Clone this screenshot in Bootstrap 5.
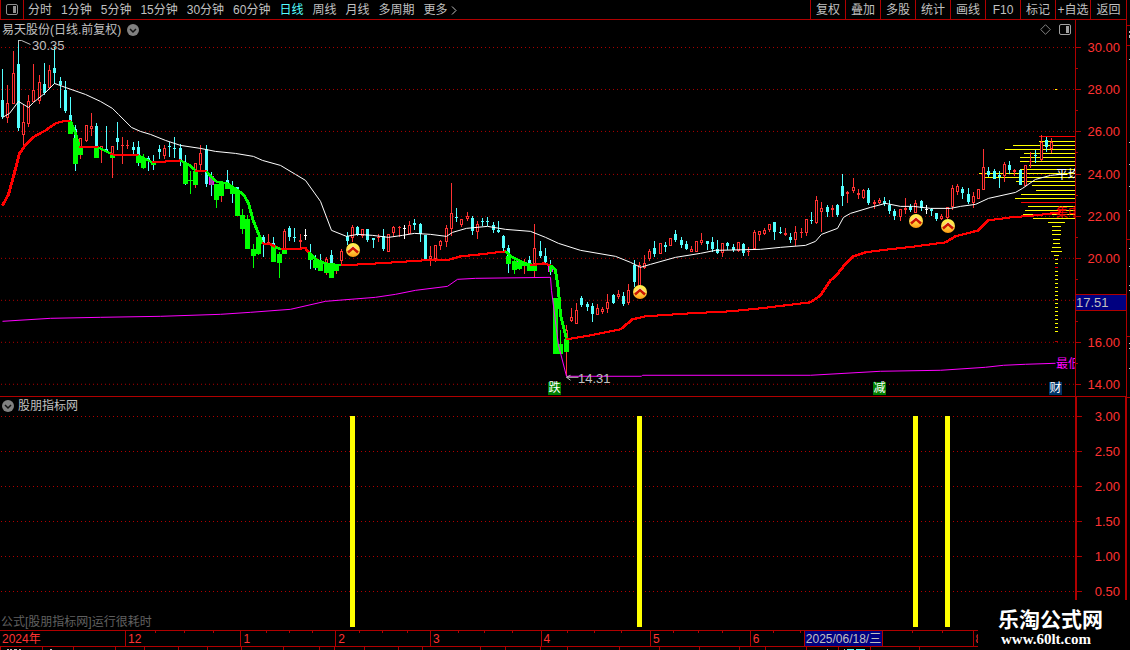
<!DOCTYPE html>
<html lang="zh-CN">
<head>
<meta charset="utf-8">
<meta name="viewport" content="width=device-width, initial-scale=1">
<title>易天股份 日线</title>
<link href="https://cdn.jsdelivr.net/npm/bootstrap@5.3.0/dist/css/bootstrap.min.css" rel="stylesheet">
<style>
:root{--rule:#b00000;--hot:#ff3232;--soft:#c0c0c0}
body{background:#000;color:var(--soft);font:12px/16px "Liberation Sans","Noto Sans CJK SC",sans-serif;min-height:100vh}
.frame{border-right:1px solid var(--rule)}
.toolbar{height:20px;border-bottom:1px solid var(--rule);font-size:12px;line-height:18px}
.toolbar button{background:none;border:0;color:inherit;padding:0;line-height:18px;white-space:nowrap}
.toolbar .periods{gap:9px}
.toolbar .active{color:#54ffff}
.toolbar .panel-btn{width:24px;border:solid var(--rule);border-width:0 1px}
.tools button{width:35px;border-left:1px solid var(--rule)}
.tools .last{width:36px}
.price{flex:377 1 0;border-bottom:1px solid var(--rule)}
.signal{flex:234 1 0;border-bottom:1px solid var(--rule)}
.plot{overflow:hidden}
.plot>svg.canvas{position:absolute;inset:0;width:100%;height:100%}
.heading{position:absolute;z-index:1;left:2px;top:1px;height:16px}
.price .heading{top:2px}
.scale{width:51px;border-left:1px solid var(--rule)}
.signal .scale{border-left-width:2px;border-right:1px solid var(--rule)}
.scale span{position:absolute;right:6px;line-height:16px;margin-top:-8px;font-size:13px;color:var(--hot)}
.signal .scale span{right:5px}
.scale i{position:absolute;left:0;width:5px;height:1px;background:var(--rule)}
.scale i.minor{width:2px}
.scale output{position:absolute;left:0;right:0;height:17px;margin-top:-8px;background:#000080;border:solid var(--rule);border-width:1px 0;line-height:15px;font-size:13px;color:var(--soft)}
.pin{position:absolute;white-space:nowrap;line-height:14px;margin-top:-7px}
.tag{font-size:13px}
.flag{width:13px;height:13px;line-height:13px;text-align:center;color:#fff;background:#008000}
.buy{position:absolute;width:16px;height:16px;margin:-8px 0 0 -8px}
.note{color:#606060;left:1px;bottom:0;position:absolute;line-height:16px}
.dates{height:16px;border-bottom:1px solid var(--rule);color:var(--hot);line-height:16px}
.dates .seg+.seg{border-left:1px solid var(--rule)}
.dates .seg{padding-left:2px;min-width:0;overflow:hidden}
.dates svg{position:absolute;inset:0;width:100%;height:3px}
.dates .today{position:absolute;top:0;height:15px;width:79px;background:#000080;color:var(--soft);border:solid var(--rule);border-width:0 1px;white-space:nowrap;text-align:center}
.foot{height:3px}
.edge{width:3px}
.brand-box{position:fixed;right:0;bottom:0;width:152px;height:50px;background:#000;color:#fff;padding:6px 0 0 20px}
.brand-box strong{font:bold 21px/24px "Noto Sans CJK SC",sans-serif;white-space:nowrap}
.brand-box a{font:bold 15px/18px "Liberation Serif",serif;color:#fff;text-decoration:none;padding-left:3px}
</style>
<script src="https://cdn.jsdelivr.net/npm/bootstrap@5.3.0/dist/js/bootstrap.bundle.min.js"></script>
</head>
<body class="d-flex vh-100 overflow-hidden">
<main class="frame d-flex flex-column flex-grow-1 position-relative overflow-hidden">
  <nav class="toolbar d-flex flex-shrink-0" aria-label="周期">
    <button class="panel-btn d-flex align-items-center justify-content-center flex-shrink-0" aria-label="侧栏"><svg width="12" height="11" viewBox="0 0 12 11"><rect x=".5" y=".5" width="11" height="10" rx="1.5" fill="none" stroke="#909090"/><path d="M7 2h3v7H7z" fill="#909090"/></svg></button>
    <div class="periods d-flex ps-1">
      <button>分时</button><button>1分钟</button><button>5分钟</button><button>15分钟</button><button>30分钟</button><button>60分钟</button><button class="active">日线</button><button>周线</button><button>月线</button><button>多周期</button><button>更多 <svg width="6" height="9" viewBox="0 0 6 9"><path d="M1 .5l4 4-4 4" fill="none" stroke="#c0c0c0"/></svg></button>
    </div>
    <div class="tools d-flex ms-auto">
      <button>复权</button><button>叠加</button><button>多股</button><button>统计</button><button>画线</button><button>F10</button><button>标记</button><button>+自选</button><button class="last">返回</button>
    </div>
  </nav>

  <section class="price d-flex">
    <div class="plot position-relative flex-grow-1" id="pricePlot">
      <div class="heading d-flex align-items-center gap-1">易天股份(日线.前复权)
        <svg width="14" height="14" viewBox="0 0 14 14"><circle cx="8" cy="7" r="6" fill="#808080"/><path d="M5 6l3 3 3-3" fill="none" stroke="#111" stroke-width="1.5"/></svg>
      </div>
      <div class="position-absolute top-0 end-0 d-flex align-items-center gap-2 pt-1 pe-1">
        <svg width="11" height="11" viewBox="0 0 11 11"><path d="M5.500 .7l4.800 4.800-4.800 4.800L.7 5.500z" fill="none" stroke="#808080"/></svg>
        <svg width="12" height="11" viewBox="0 0 12 11"><rect x=".5" y=".5" width="11" height="10" rx="1.500" fill="none" stroke="#a0a0a0"/><path d="M7 2h3v7H7z" fill="#a0a0a0"/></svg>
      </div>
      <svg class="canvas" id="k" viewBox="0 20 1075 376" preserveAspectRatio="none" shape-rendering="crispEdges"></svg>
    </div>
    <div class="scale position-relative flex-shrink-0" id="priceScale"></div>
  </section>

  <section class="signal d-flex">
    <div class="plot position-relative flex-grow-1">
      <div class="heading d-flex align-items-center"><svg class="me-1" width="12" height="12" viewBox="0 0 12 12"><circle cx="6" cy="6" r="6" fill="#808080"/><path d="M3 5l3 3 3-3" fill="none" stroke="#111" stroke-width="1.500"/></svg>股朋指标网</div>
      <svg class="canvas" id="s" viewBox="0 397 1075 233" preserveAspectRatio="none" shape-rendering="crispEdges"></svg>
      <div class="note">公式[股朋指标网]运行很耗时</div>
    </div>
    <div class="scale position-relative flex-shrink-0" id="signalScale"></div>
  </section>

  <div class="dates d-flex position-relative flex-shrink-0" id="dates"></div>
  <svg class="foot w-100 flex-shrink-0" viewBox="0 0 1127 3" preserveAspectRatio="none" id="foot" shape-rendering="crispEdges"></svg>
</main>
<svg class="edge h-100 flex-shrink-0" viewBox="0 0 3 650" preserveAspectRatio="none" shape-rendering="crispEdges"><path d="M0 25.500h3M0 45.500h3M0 239.500h3M0 336.500h3M0 397.500h3" stroke="#b00000"/><path d="M2 31h1v2h-1zM2 35h1v3h-1zM2 59h1v1h-1zM2 142h1v1h-1zM2 164h1v1h-1zM2 186h1v1h-1zM2 210h1v1h-1zM2 248h1v1h-1zM2 266h1v1h-1zM2 285h1v1h-1zM2 290h1v1h-1zM2 343h1v1h-1zM2 348h1v1h-1zM2 368h1v1h-1z" fill="#c0c0c0"/></svg>
<footer class="brand-box d-flex flex-column"><strong>乐淘公式网</strong><a href="#">www.60lt.com</a></footer>

<script>
const C={c:'#54ffff',r:'#ff3232',g:'#00ff00',w:'#ffffff',m:'#ff00ff'};
// x, kind, high, low, body top, body bottom
const candles=`2c69 119 100 117;7r85 123 103 118;13r51 104 73 104;18c40 131 64 128;23r105 145 122 135;28r95 127 101 124;33r64 102 90 102;39r75 104 82 101;44c63 95 84 93;49r65 89 70 88;54c47 84 68 73;60c77 108 81 85;65c81 113 90 111;70c97 122 115 122;70g122 134 122 134;75c125 171 129 140;75g138 164 138 164;80r138 159 138 147;80g147 155 147 155;86r125 142 125 141;91r113 136 126 129;96c123 147 126 147;96g147 158 147 158;101r146 163 146 150;106c126 151 149 151;112r146 178 146 154;112g155 158 155 158;117c122 150 138 142;122r137 164 145 146;127r140 149 145 146;133c142 154 147 150;138c141 166 147 156;138g156 163 156 163;143g154 169 158 168;148c156 171 158 160;153c155 170 161 165;153g162 165 162 165;159c145 159 149 152;164r145 159 148 156;169c142 157 146 147;174c137 158 148 149;180c144 166 148 160;185c155 185 163 184;185g163 184 163 184;190g171 194 180 181;195r163 188 163 171;195g171 185 171 185;200r145 170 153 165;206c145 187 149 184;211c172 196 176 185;211m176 185 176 185;216g184 208 184 200;221r182 202 183 196;221g182 196 182 196;227c170 184 180 184;227g184 189 184 189;232c181 203 187 194;232g187 194 187 194;237c187 191 187 191;237g190 216 190 216;242g209 234 215 229;247g215 249 219 249;253g244 268 249 256;258g237 255 237 254;263c235 257 237 243;268r234 244 242 244;273c237 247 243 247;273g246 262 246 262;279g252 278 254 263;284r229 249 231 249;284g249 254 249 254;289c226 241 228 237;294c228 242 237 238;300r234 248 240 242;305w229 240 235 236;310c244 269 254 260;310g254 260 254 260;315c255 270 260 268;315g260 268 260 268;320c254 262 260 262;320g262 271 262 271;326r257 275 259 265;326g264 273 264 273;331c250 264 255 264;331g264 278 264 278;336r264 274 264 271;336g264 271 264 271;341r249 264 251 261;347c232 245 236 241;352r225 242 227 238;357c226 236 227 235;362r229 238 229 236;367c229 242 229 240;373c238 248 238 240;378r234 242 237 238;383c229 251 236 249;388r234 252 234 252;393r226 237 227 233;399r226 237 227 228;404w225 239 228 229;409r221 234 225 234;414c219 230 223 225;420c223 242 224 234;425c235 259 235 259;430r246 266 256 259;435r245 262 245 259;440r240 250 241 246;446r225 247 228 242;451r183 236 213 229;456c208 222 217 218;461r219 227 219 225;467r212 221 216 219;472c216 235 218 231;477r221 239 224 232;482c218 226 221 222;487c217 226 221 222;493c222 233 225 230;498c221 233 230 232;503c235 251 236 248;508c245 273 248 256;508g256 264 256 264;514g260 274 261 270;519g259 270 261 269;519m261 269 261 269;519g262 269 262 269;524r259 274 262 266;524g262 266 262 266;529c256 264 260 264;529g263 271 263 271;534r224 277 248 264;534g264 271 264 271;540c241 258 251 256;545c248 264 256 262;550c260 275 265 272;550m265 272 265 272;555g298 354 298 354;560g330 354 344 354;566r325 376 330 339;566g339 352 339 352;571r308 322 317 321;576r303 324 310 324;581c296 307 298 305;587c302 311 304 307;592c303 322 306 314;597r304 315 308 315;602r307 314 309 312;607r294 313 302 309;613c294 304 295 303;618r290 299 294 297;623c292 306 296 304;628r284 305 290 303;634c260 287 265 282;639r262 286 265 286;644r255 269 263 268;649r249 261 251 259;654c241 257 248 254;660r243 254 243 254;665c242 252 245 247;670r238 246 238 246;675c230 242 234 240;681c237 248 240 245;686c241 250 244 249;691r246 252 249 252;696r241 252 241 252;701r233 245 240 243;707c241 250 241 244;712c237 252 242 249;717c240 254 249 253;722r243 257 243 253;727c242 250 243 246;733c244 252 247 250;738r242 252 242 251;743c243 256 244 253;748r247 256 251 252;754r230 250 232 249;759r231 241 231 235;764r228 235 230 234;769r224 232 224 230;774c222 240 222 232;780c227 234 232 233;785r228 236 233 235;790c233 243 237 240;795r226 246 232 240;801r228 238 232 233;806r219 236 219 233;811c212 224 220 221;816r196 224 200 223;821r202 232 208 212;827c205 217 207 212;832r205 217 208 210;837c204 217 205 215;842c174 206 186 196;847r191 203 192 194;853r178 193 187 191;858r189 199 193 195;863r189 199 190 198;868c188 205 190 203;874r200 209 202 204;879r198 204 200 203;884c197 206 201 204;889c200 214 205 211;894c209 220 211 216;900r209 221 209 217;905r198 214 208 210;910c204 212 207 210;915r200 213 203 213;921c200 211 201 208;926w205 214 209 210;931c208 216 209 211;936c213 221 213 219;941r214 220 216 219;947r207 219 207 218;952r185 210 188 207;957r184 195 186 192;962c187 199 189 193;968c188 204 194 202;973r192 208 196 203;978r189 199 189 199;983r149 190 167 190;988c167 177 171 175;994c169 179 171 179;999c171 188 175 177;1004r162 182 164 176;1009c161 174 165 170;1014r169 176 170 172;1020c169 185 170 185;1025r165 186 165 186;1030r152 168 161 162;1035c150 163 155 156;1041r135 161 142 160;1046c137 152 140 147;1051r138 153 142 149`;
const box=(x,y,w,h,f)=>`<rect x="${x}" y="${y}" width="${w}" height="${h}" fill="${f}"/>`;
const line=(p,c,w,dx=.5)=>`<polyline points="${p}" fill="none" stroke="${c}" stroke-width="${w}" transform="translate(${dx} .5)"/>`;
let out='';
const grid=[47,89,131,174,216,258,300,342,384];
grid.forEach(y=>out+=`<path d="M1 ${y+.5}H1075" stroke="#b00000" stroke-dasharray="1 3"/>`);
// chip distribution: y, left edge, highlighted
[[136,1039,1],[141,1039],[145,1013],[149,1005],[153,1024],[157,1020],[161,1020],[165,1029],[169,1021],[173,979],[177,982],[181,1016],[185,1032],[190,1036],[194,1021],[198,1015],[202,1021,1],[206,1028],[210,1025],[214,1023],[218,1033]].forEach(([y,x,red])=>out+=box(x,y,1075-x,1,red?'#f00':'#ff0'));
[[222,17],[226,9],[230,9],[234,9],[239,7],[243,7],[247,9],[251,11],[255,5]].forEach(([y,w])=>out+=box(1056-(w-1)/2,y,w,1,'#ff0'));
for(let y=259;y<334;y+=4)out+=box(1055,y,3,1,y===267?'#f00':'#ff0');
out+=box(1055,341,3,1,'#b00000')+box(1055,89,2,1,'#ff0');
candles.split(';').forEach(t=>{
  const [,x0,k,rest]=t.match(/^(\d+)(\w)(.*)$/),x=+x0,[h,l,a,b]=rest.split(' ').map(Number),f=C[k];
  out+=box(x,h,1,Math.max(1,l-h),f);
  if(k==='g')out+=box(x-2,a,5,b-a,f);
  else if(k==='m')out+=box(x-2,a,1,b-a,f)+box(x+2,a,1,b-a,f)+box(x-1,a,3,b-a,x===211?'#a040a0':C.g);
  else {out+=box(x-1,a,3,b-a,f);if(k==='r'&&b-a>2)out+=box(x,a+1,1,b-a-2,'#000');}
});
out+=line('2,321 50,318 100,317 160,316 220,314 250,312 290,309 325,301 375,297 395,294 415,290 447,286 457,279 475,278 550,277 551,290 558,345 566,376 641,376 642,375 810,375 880,371 940,370 985,367 1003,365 1025,364 1055,363',C.m,1);
out+=line('2,117 9,113 18,101 28,107 33,102 44,93 54,83 65,87 85,94 100,101 112,108 118,114 131,127 140,131 150,134 165,140 180,145 200,148 215,151 235,153 253,156 262,160 280,165 295,174 305,180 320,201 331,230 346,236 357,234 372,235 388,237 402,235 414,233 430,234 446,236 452,232 466,228 487,226 505,229 530,231 545,237 558,243 580,250 615,256 630,262 640,267 650,264 675,257 700,253 715,250 760,249 780,247 805,245 815,241 821,234 837,228 843,217 850,213 870,207 885,203 900,206 913,206 930,208 950,208 960,206 975,204 988,198 1015,192 1022,188 1035,179 1050,175 1060,174','#fff',1);
[['r','2,205 8,194 13,176 19,153 24,146 34,136 45,130 55,123 62,121 70,121'],['g','70,121 75,133 79,147'],['r','79,147 98,147'],['g','98,147 110,153'],['r','110,154 138,155'],['g','138,155 152,162'],['r','152,162 180,160'],['g','180,160 188,164 195,170'],['r','195,171 206,171'],['g','206,171 215,181 227,183 243,194 248,203 253,221 262,243'],['r','262,243 270,244 278,248'],['g','275,247 281,249'],['r','281,249 305,248 308,252'],['g','308,252 315,259 325,263 341,265'],['r','341,265 378,263 423,260 446,260 460,256 480,254 505,251'],['g','505,251 512,257 525,263 530,264'],['r','530,265 543,263 550,265'],['g','550,265 555,270 558,290 560,315 566,339'],['r','566,339 590,335 620,329 632,319 645,316 690,313 730,311 760,308 810,302 820,295 830,280 836,275 843,266 853,256 865,252 880,250 915,246 945,242 955,236 978,230 988,220 1010,217 1035,215 1060,212']].forEach(([c,p])=>{const f=c==='r'?'#f00':C.g;out+=line(p,f,2,0)+line(p,f,2,1);});
out+=line('18,44 18,40 21,40 30,44','#c0c0c0',1)+line('570,375 566,377 578,377','#c0c0c0',1)+line('566,377 570,380','#c0c0c0',1);
k.innerHTML=out;

const plot=document.getElementById('pricePlot');
const at=(x,y)=>`left:${x/1075*100}%;top:${(y-20)/376*100}%`;
let pins='';
[[32,46,'30.35',''],[578,379,'14.31','']].forEach(([x,y,t])=>pins+=`<span class="pin tag" style="${at(x,y)}">${t}</span>`);
[[1056,175,'平均','#fff'],[1056,213,'集中','#f00'],[1056,364,'最低','#f0f']].forEach(([x,y,t,c])=>pins+=`<span class="pin" style="${at(x,y)};color:${c}">${t}</span>`);
[[548,389,'跌','#008000'],[873,389,'减','#008000'],[1049,389,'财','#003468']].forEach(([x,y,t,c])=>pins+=`<span class="pin flag" style="${at(x,y)};background:${c}">${t}</span>`);
[[353,250],[640,292],[916,221],[948,226]].forEach(([x,y])=>pins+=`<svg class="buy" style="${at(x,y)}" viewBox="0 0 16 16"><defs><linearGradient id="sun" x2="0" y2="1"><stop stop-color="#fff34a"/><stop offset=".5" stop-color="#ffd94a"/><stop offset="1" stop-color="#ff9a10"/></linearGradient></defs><circle cx="8" cy="8" r="7" fill="url(#sun)"/><path d="M3.500 8.500L8 4.500l4.500 4" fill="none" stroke="#ffe9c0" stroke-width="1.500"/><path d="M3 10.500L8 6l5 4.500" fill="none" stroke="#c81400" stroke-width="2.400"/></svg>`);
plot.insertAdjacentHTML('beforeend',pins);

let sc='';
const py=y=>`top:${(y-20)/376*100}%`;
[30,28,26,24,22,20,18,16,14].forEach((v,i)=>{const y=grid[i];sc+=`<i style="${py(y)}"></i>`;if(v!==18)sc+=`<span style="${py(y+1)}">${v}.00</span>`;if(v>14)sc+=`<i class="minor" style="${py(y+21)}"></i>`;});
priceScale.innerHTML=sc+`<output style="${py(302)}">17.51</output>`;

const sy=y=>`top:${(y-397)/233*100}%`;
let sg='',ss='';
['3.00','2.50','2.00','1.50','1.00','0.50'].forEach((v,i)=>{const y=416+35*i;sg+=`<path d="M1 ${y+.5}H1075" stroke="#b00000" stroke-dasharray="1 3"/>`;ss+=`<i style="${sy(y)}"></i><span style="${sy(y+1)}">${v}</span>`;});
[350,637,913,945].forEach(x=>sg+=box(x,416,5,211,'#ff0'));
s.innerHTML=sg;signalScale.innerHTML=ss;

const seg=[[0,'2024年'],[126,'12'],[241,'1'],[335,'2'],[429,'3'],[539,'4'],[648,'5'],[747,'6'],[972,'8'],[1126,'']];
let d='';
for(let i=0;i<seg.length-1;i++)d+=`<div class="seg" style="flex:${seg[i+1][0]-seg[i][0]} 1 0">${seg[i][1]}</div>`;
d+='<svg viewBox="0 0 1126 3" preserveAspectRatio="none" shape-rendering="crispEdges">';
[155,184,213,266,289,312,359,382,407,458,484,512,567,594,621,673,698,722,773,800,912,942].forEach(x=>d+=box(x,0,1,2,'#b00000'));
dates.innerHTML=d+`</svg><div class="today" style="left:${804/1126*100}%">2025/06/18/三</div>`;
let ft='';
[0,42,73,115,144,178,207,241,283,319,334,364,398,422,480,505,540,568,620,660,700,740,766,807,839,871,920].forEach(x=>ft+=box(x,0,1,3,'#b00000'));
[[7,2],[10,2],[14,3],[19,2],[50,2],[828,1],[845,1]].forEach(([x,w])=>ft+=box(x,2,w,1,'#c0c0c0'));
ft+=box(848,2,7,1,C.c)+box(857,2,9,1,C.c);
foot.innerHTML=ft;
</script>
</body>
</html>
